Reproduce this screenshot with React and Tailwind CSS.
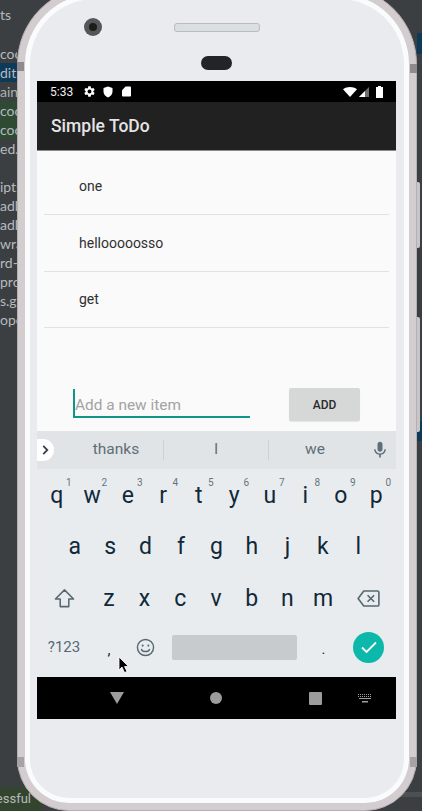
import { useState } from "react"

const font = { fontFamily: "Roboto, sans-serif" }

const sidebarRows = [
    { text: "ts", mt: "mt-[5px]" },
    { text: "coc", mt: "mt-[20px]" },
    { text: "dith", bg: "bg-[#0d3a58]" },
    { text: "ain", color: "text-[#a9b3ad]" },
    { text: "coc", bg: "bg-[#2f4a33]" },
    { text: "coc", bg: "bg-[#2f4a33]" },
    { text: "ed.", mb: "mb-[19px]" },
    { text: "ipts" },
    { text: "adl" },
    { text: "adl" },
    { text: "wra" },
    { text: "rd-" },
    { text: "pro" },
    { text: "s.gr" },
    { text: "ope" },
]

const topRow = [["q", 1], ["w", 2], ["e", 3], ["r", 4], ["t", 5], ["y", 6], ["u", 7], ["i", 8], ["o", 9], ["p", 0]]
const midRow = ["a", "s", "d", "f", "g", "h", "j", "k", "l"]
const lowRow = ["z", "x", "c", "v", "b", "n", "m"]
const todos = ["one", "hellooooosso", "get"]

function Letter({ children, hint }) {
    return (
        <div className="relative flex h-full items-center justify-center pb-[1px] text-[23px] leading-none text-[#10293a]">
            {children}
            {hint !== undefined && <span className="absolute right-[3px] top-[8px] text-[10px] leading-none text-[#66757e]">{hint}</span>}
        </div>
    )
}

function StatusBar() {
    return (
        <div className="flex h-[21px] items-center bg-black pl-[13px] pr-[13px] text-white">
            <span className="w-[33px] text-[12px] leading-none text-[#eeeeee]">5:33</span>
            <svg viewBox="0 0 24 24" className="h-[13px] w-[13px]" fill="white">
                <path d="M19.14 12.94c.04-.3.06-.61.06-.94 0-.32-.02-.64-.07-.94l2.03-1.58c.18-.14.23-.41.12-.61l-1.92-3.32c-.12-.22-.37-.29-.59-.22l-2.39.96c-.5-.38-1.03-.7-1.62-.94l-.36-2.54c-.04-.24-.24-.41-.48-.41h-3.84c-.24 0-.43.17-.47.41l-.36 2.54c-.59.24-1.13.57-1.62.94l-2.39-.96c-.22-.08-.47 0-.59.22L2.74 8.87c-.12.21-.08.47.12.61l2.03 1.58c-.05.3-.09.63-.09.94s.02.64.07.94l-2.03 1.58c-.18.14-.23.41-.12.61l1.92 3.32c.12.22.37.29.59.22l2.39-.96c.5.38 1.03.7 1.62.94l.36 2.54c.05.24.24.41.48.41h3.84c.24 0 .44-.17.47-.41l.36-2.54c.59-.24 1.13-.56 1.62-.94l2.39.96c.22.08.47 0 .59-.22l1.92-3.32c.12-.22.07-.47-.12-.61l-2.01-1.58zM12 15.6c-1.98 0-3.6-1.62-3.6-3.6s1.62-3.6 3.6-3.6 3.6 1.62 3.6 3.6-1.62 3.6-3.6 3.6z" />
            </svg>
            <svg viewBox="0 0 10 12" className="ml-[7px] h-[12px] w-[10px]" fill="white">
                <path d="M5 0.5 L9.5 2 V5.5 C9.5 8.5 7.5 10.6 5 11.5 C2.5 10.6 0.5 8.5 0.5 5.5 V2 Z" />
            </svg>
            <svg viewBox="0 0 10 11" className="ml-[9px] h-[11px] w-[9px]" fill="white">
                <path d="M4 0 H9 A1 1 0 0 1 10 1 V10 A1 1 0 0 1 9 11 H1 A1 1 0 0 1 0 10 V4 Z" />
            </svg>
            <div className="flex-1" />
            <svg viewBox="0 0 14 10" className="h-[10px] w-[14px]" fill="white">
                <path d="M0 2.2 C4 -0.7 10 -0.7 14 2.2 L7 10 Z" />
            </svg>
            <svg viewBox="0 0 10 10" className="ml-[2px] h-[10px] w-[10px]">
                <path d="M10 0 V10 H0 Z" fill="#6e6e6e" />
                <path d="M6 4 V10 H0 Z" fill="white" />
            </svg>
            <svg viewBox="0 0 7 12" className="ml-[7px] h-[12px] w-[7px]" fill="white">
                <path d="M2 0 H5 V1 H7 V12 H0 V1 H2 Z" />
            </svg>
        </div>
    )
}

function Suggestions() {
    return (
        <div className="flex h-[38px] items-center bg-[#e1e4e7] text-[15.5px] text-[#5e6e77]">
            <div className="flex h-[22px] w-[17px] items-center justify-center rounded-r-full bg-white">
                <svg viewBox="0 0 10 12" className="h-[12px] w-[9px]" fill="none" stroke="#33434c" strokeWidth="2">
                    <path d="M2.5 1.5 L7 6 L2.5 10.5" />
                </svg>
            </div>
            <div className="w-[109px] pl-[15px] text-center">thanks</div>
            <div className="h-[20px] w-[1px] bg-[#cdd1d5]" />
            <div className="w-[104px] text-center">I</div>
            <div className="h-[20px] w-[1px] bg-[#cdd1d5]" />
            <div className="w-[92px] text-center">we</div>
            <svg viewBox="0 0 24 24" className="ml-[9px] h-[20px] w-[20px]" fill="#5e6e77">
                <path d="M12 14c1.66 0 3-1.34 3-3V5c0-1.66-1.34-3-3-3S9 3.34 9 5v6c0 1.66 1.34 3 3 3zm5.3-3c0 3-2.54 5.1-5.3 5.1S6.7 14 6.7 11H5c0 3.41 2.72 6.23 6 6.72V21h2v-3.28c3.28-.48 6-3.3 6-6.72h-1.7z" />
            </svg>
        </div>
    )
}

function Keyboard() {
    return (
        <div className="flex h-[208px] flex-col bg-[#e9ecef]">
            <div className="grid h-[52px] grid-cols-10 px-[2px] pt-[1px]">
                {topRow.map(([l, n]) => <Letter key={l} hint={n}>{l}</Letter>)}
            </div>
            <div className="grid h-[52px] grid-cols-9 px-[20px]">
                {midRow.map(l => <Letter key={l}>{l}</Letter>)}
            </div>
            <div className="flex h-[51px] items-center">
                <div className="flex w-[54px] justify-center">
                    <svg viewBox="0 0 22 22" className="h-[21px] w-[21px]" fill="none" stroke="#566872" strokeWidth="1.6" strokeLinejoin="round">
                        <path d="M11 2 L20.5 11.5 H15.5 V19.5 H6.5 V11.5 H1.5 Z" />
                    </svg>
                </div>
                <div className="grid h-full flex-1 grid-cols-7">
                    {lowRow.map(l => <Letter key={l}>{l}</Letter>)}
                </div>
                <div className="flex w-[55px] justify-center">
                    <svg viewBox="0 0 24 18" className="h-[17px] w-[23px]" fill="none" stroke="#566872" strokeWidth="1.7" strokeLinejoin="round">
                        <path d="M7 1 H21.5 A1.5 1.5 0 0 1 23 2.5 V15.5 A1.5 1.5 0 0 1 21.5 17 H7 L1 9 Z" />
                        <path d="M11 5.5 L18 12.5 M18 5.5 L11 12.5" />
                    </svg>
                </div>
            </div>
            <div className="flex h-[46px] items-center">
                <div className="w-[54px] text-center text-[15px] text-[#566872]">?123</div>
                <div className="w-[36px] pt-[6px] text-center text-[15px] leading-none text-[#10293a]">,</div>
                <div className="flex w-[36px] justify-center">
                    <svg viewBox="0 0 20 20" className="h-[19px] w-[19px]" fill="none" stroke="#566872" strokeWidth="1.5">
                        <circle cx="10" cy="10" r="8.5" />
                        <circle cx="7" cy="8" r="1.1" fill="#566872" stroke="none" />
                        <circle cx="13" cy="8" r="1.1" fill="#566872" stroke="none" />
                        <path d="M5.8 12 C7 15 13 15 14.2 12" strokeLinecap="round" />
                    </svg>
                </div>
                <div className="flex w-[143px] justify-center">
                    <div className="h-[25px] w-[125px] rounded-[2px] bg-[#c7cbce]" />
                </div>
                <div className="w-[35px] pt-[5px] text-center text-[15px] leading-none text-[#10293a]">.</div>
                <div className="flex w-[55px] justify-center">
                    <div className="flex h-[31px] w-[31px] items-center justify-center rounded-full bg-[#0cb8aa]">
                        <svg viewBox="0 0 16 12" className="h-[12px] w-[16px]" fill="none" stroke="white" strokeWidth="1.8">
                            <path d="M1 6.5 L5.5 11 L15 1.5" />
                        </svg>
                    </div>
                </div>
            </div>
        </div>
    )
}

function NavBar() {
    return (
        <div className="flex h-[42px] items-center bg-black">
            <div className="flex w-[160px] justify-center">
                <svg viewBox="0 0 14 12" className="h-[12px] w-[14px]"><path d="M0 0 H14 L7 12 Z" fill="#9c9c9c" /></svg>
            </div>
            <div className="flex w-[38px] justify-center">
                <div className="h-[12px] w-[12px] rounded-full bg-[#9c9c9c]" />
            </div>
            <div className="flex flex-1 items-center justify-between pl-[74px] pr-[24px]">
                <div className="h-[13px] w-[13px] rounded-[1px] bg-[#9c9c9c]" />
                <svg viewBox="0 0 14 9" className="h-[9px] w-[14px]" fill="#9c9c9c">
                    <path d="M0 0h1v1H0zM2 0h1v1H2zM4 0h1v1H4zM6 0h1v1H6zM8 0h1v1H8zM10 0h1v1h-1zM12 0h1v1h-1zM0 2h1v1H0zM2 2h1v1H2zM4 2h1v1H4zM6 2h1v1H6zM8 2h1v1H8zM10 2h1v1h-1zM12 2h1v1h-1zM1 4h12v1H1zM4 7h6v1.5H4z" />
                </svg>
            </div>
        </div>
    )
}

export default function App() {
    const [item, setItem] = useState("")

    return (
        <div className="relative flex h-[811px] w-[422px] flex-col overflow-hidden bg-[#3c3f41]" style={font}>
            {/* IDE peeking out behind the emulator */}
            <div className="flex-1 text-[14px] text-[#b5babd]" style={{ fontFamily: "Lato, sans-serif" }}>
                {sidebarRows.map((row, i) => (
                    <div key={i} className={`flex h-[19px] w-[17px] items-center overflow-hidden whitespace-nowrap ${row.bg || ""} ${row.mt || ""} ${row.mb || ""} ${row.color || ""}`}>
                        {row.text}
                    </div>
                ))}
            </div>
            <div className="flex h-[24px]">
                <div className="flex w-[42px] items-center justify-end overflow-hidden whitespace-nowrap bg-[#34452f] pr-[11px] text-[13px] text-[#b5babd]">essful</div>
                <div className="mt-[5px] flex-1 border-t-[5px] border-[#4c5052] bg-[#3c3f41]" />
            </div>

            {/* side buttons + blue editor highlights on the right */}
            <div className="absolute left-[417px] top-[33px] h-[21px] w-[5px] bg-[#0d3a58]" />
            <div className="absolute left-[417px] top-[421px] h-[20px] w-[5px] bg-[#0d3a58]" />
            <div className="absolute left-[416px] top-[182px] h-[66px] w-[4px] rounded-r-[2px] bg-[#c9c6c9]" />
            <div className="absolute left-[416px] top-[317px] h-[115px] w-[4px] rounded-r-[2px] bg-[#c9c6c9]" />

            {/* emulator phone */}
            <div className="absolute left-[17px] top-[-14px] h-[825px] w-[400px] rounded-t-[78px] rounded-b-[52px] border border-[#b5aeb2] bg-[#d3cdd0] p-[7px]">
                <div className="h-full rounded-t-[70px] rounded-b-[44px] bg-[#fafbfc] p-[5px]">
                    <div className="flex h-full flex-col rounded-t-[65px] rounded-b-[39px] bg-[#e9ebee] pl-[7px] pr-[8px]">
                        <div className="h-[82px] shrink-0">
                            <div className="flex items-center pt-[19px]">
                                <div className="ml-[47px] flex h-[18px] w-[18px] items-center justify-center rounded-full bg-[#54565a]">
                                    <div className="h-[8px] w-[8px] rounded-full bg-[#1c1c18]" />
                                </div>
                                <div className="ml-[72px] h-[9px] w-[86px] rounded-[3px] border border-[#b9bcbf] bg-[#dcdfe1]" />
                            </div>
                            <div className="ml-[164px] mt-[20px] h-[14px] w-[31px] rounded-full bg-[#222428]" />
                        </div>

                        <div className="flex h-[638px] shrink-0 flex-col">
                            <StatusBar />
                            <div className="flex h-[49px] items-center border-b border-[#8a8a8a] bg-[#212121] pl-[14px] text-[17.5px] font-medium text-[#e4e4e4]">
                                Simple ToDo
                            </div>

                            <div className="h-[280px] bg-[#fafafa] px-[7px]">
                                {todos.map((t, i) => (
                                    <div key={t} className={`flex items-center border-b border-[#e2e2e2] pl-[35px] text-[14px] text-[#303030] ${i === 0 ? "h-[64px] pt-[7px]" : i === 1 ? "h-[57px]" : "h-[56px]"}`}>
                                        {t}
                                    </div>
                                ))}
                                <div className="ml-[29px] mt-[60px] flex items-start">
                                    <input
                                        value={item}
                                        onChange={e => setItem(e.target.value)}
                                        placeholder="Add a new item"
                                        className="mt-[1px] h-[29px] w-[177px] border-b-2 border-l-2 border-[#0e9688] bg-transparent pt-[4px] text-[15.4px] text-[#303030] outline-none placeholder:text-[#a3a3a3]"
                                    />
                                    <button type="button" className="ml-[39px] h-[33px] w-[71px] rounded-[2px] bg-[#d6d7d7] text-[12px] font-medium text-[#2a2a2a] shadow-[0_1px_1px_rgba(0,0,0,0.08)]">
                                        ADD
                                    </button>
                                </div>
                            </div>

                            <Suggestions />
                            <Keyboard />
                            <NavBar />
                        </div>
                    </div>
                </div>
            </div>

            {/* darker bands where the frame changes section */}
            <div className="absolute left-[17px] top-[62px] h-[9px] w-[7px] bg-[#8f8a8e]" />
            <div className="absolute left-[410px] top-[64px] h-[9px] w-[7px] bg-[#8f8a8e]" />
            <div className="absolute left-[17px] top-[757px] h-[10px] w-[7px] bg-[#a8a2a6]" />
            <div className="absolute left-[410px] top-[757px] h-[10px] w-[7px] bg-[#a8a2a6]" />

            {/* mouse pointer */}
            <svg viewBox="0 0 12 18" className="absolute left-[118px] top-[656px] h-[18px] w-[12px]">
                <path d="M1 1 V14 L4 11 L6.5 16.5 L9 15.5 L6.5 10.5 H10.5 Z" fill="black" stroke="white" strokeWidth="0.8" />
            </svg>
        </div>
    )
}
